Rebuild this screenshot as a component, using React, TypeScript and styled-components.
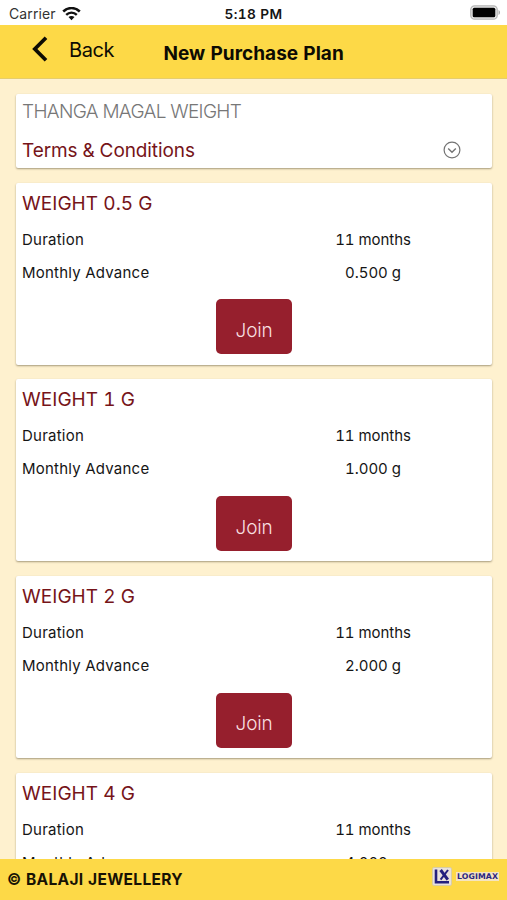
import React from 'react';
import styled, { createGlobalStyle } from 'styled-components';

const GlobalStyle = createGlobalStyle`
  * { box-sizing: border-box; }
  html, body { margin: 0; padding: 0; }
  body { background: #fef1cf; overflow: hidden; }
`;

const Screen = styled.div`
  width: 507px;
  height: 900px;
  display: flex;
  flex-direction: column;
  overflow: hidden;
  background: #fef1cf;
  color: #151515;
  font-family: Inter, "Liberation Sans", sans-serif;
  font-variant-numeric: tabular-nums;
`;

const StatusBar = styled.div`
  flex: none;
  height: 25px;
  display: grid;
  grid-template-columns: 1fr auto 1fr;
  align-items: center;
  padding: 3px 6px 0 9px;
  background: #fff;
  font-size: 14px;
  line-height: 20px;
`;

const Carrier = styled.div`
  display: flex;
  align-items: center;
  gap: 6px;
  color: #333;
  letter-spacing: 0.1px;

  svg { margin-top: -1px; }
`;

const Clock = styled.div`
  margin-right: 3px;
  font-weight: 600;
  font-size: 13.7px;
  letter-spacing: 0.4px;
`;

const BatterySlot = styled.div`
  display: flex;
  justify-content: flex-end;
  padding-bottom: 3px;
`;

const Header = styled.header`
  flex: none;
  height: 54px;
  display: grid;
  grid-template-columns: 163.5px 1fr;
  align-items: center;
  background: #fdd947;
  border-bottom: 1px solid #e6cd6c;
  color: #0d0b03;
`;

const BackButton = styled.button`
  display: flex;
  align-items: center;
  gap: 20px;
  padding: 0 0 6px 32px;
  border: 0;
  background: none;
  color: inherit;
  font: 400 20px/26px Inter, sans-serif;
  letter-spacing: -0.45px;

  span { padding-top: 2px; }
`;

const Title = styled.h1`
  margin: 0;
  padding-top: 4px;
  font-size: 19px;
  line-height: 26px;
  font-weight: 700;
  letter-spacing: 0.04px;
`;

const Content = styled.main`
  flex: 1;
  min-height: 0;
  overflow: hidden;
  display: flex;
  flex-direction: column;
  gap: 14.65px;
  padding: 15px 15px 0 16px;
`;

const Card = styled.section<{ $height: number }>`
  flex: none;
  height: ${(p) => p.$height}px;
  padding: 0 6px;
  background: #fff;
  border-radius: 2px;
  box-shadow: 0 1px 2px rgba(60, 50, 20, 0.45);
`;

const PlanName = styled.div`
  padding-top: 5px;
  font-size: 19px;
  line-height: 26px;
  font-weight: 300;
  letter-spacing: -0.65px;
  color: #777;
`;

const TermsRow = styled.div`
  display: flex;
  justify-content: space-between;
  align-items: center;
  padding: 13px 25px 0 0;
  font-size: 19px;
  line-height: 26px;
  letter-spacing: -0.1px;
  color: #761419;

  svg { margin-top: -3px; }
`;

const WeightTitle = styled.h2`
  margin: 0;
  padding-top: 8px;
  font-size: 19px;
  line-height: 26px;
  font-weight: 400;
  letter-spacing: 0.05px;
  color: #761419;
`;

const Details = styled.dl`
  margin: 0;
  padding-top: 6px;
  display: grid;
  grid-template-columns: 1fr 226px;
  grid-auto-rows: 33px;
  align-items: center;
  font-size: 15px;
  letter-spacing: 0.23px;
`;

const Label = styled.dt``;

const Value = styled.dd`
  margin: 0;
  text-align: center;
  letter-spacing: -0.05px;
`;

const JoinButton = styled.button`
  display: block;
  width: 76px;
  height: 55px;
  margin: 10.8px auto 0;
  padding: 8px 0 0;
  border: 0;
  border-radius: 5px;
  background: #961f2d;
  color: #f8dfe0;
  font: 300 19px/26px Inter, sans-serif;
  letter-spacing: -0.2px;
`;

const Footer = styled.footer`
  flex: none;
  height: 41.5px;
  display: flex;
  align-items: center;
  justify-content: space-between;
  padding: 0 8px 0 7px;
  background: #fdd947;
  color: #171204;
  font-size: 15.5px;
  font-weight: 700;
  letter-spacing: 0.33px;
`;

const Brand = styled.div`
  display: flex;
  align-items: center;
  gap: 4px;
  padding-bottom: 5px;
`;

const BrandName = styled.span`
  padding: 0 1px;
  background: #f5e4c0;
  color: #2a2580;
  font: 700 7.8px/9px "DejaVu Sans", sans-serif;
  letter-spacing: 0.1px;
`;

const WifiIcon = () => (
  <svg width="19" height="14" viewBox="0 0 19 14" fill="none" stroke="#111">
    <path d="M1.2 4.5C5.9-.1 13.1-.1 17.8 4.5" strokeWidth="2.5" />
    <path d="M4.2 7.8c3-2.9 7.6-2.9 10.6 0" strokeWidth="2.4" />
    <path d="M6.5 10.1c1.7-1.6 4.3-1.6 6 0l-3 3.1z" fill="#111" stroke="none" />
  </svg>
);

const BatteryIcon = () => (
  <svg width="31" height="15" viewBox="0 0 31 15">
    <rect x=".8" y=".8" width="26.4" height="13.4" rx="3.8" fill="#e8e8e8" stroke="#b5b5b5" strokeWidth="1.3" />
    <rect x="2.7" y="2.7" width="22.6" height="9.6" rx="1.6" fill="#000" />
    <path d="M28.5 5v5c2-.8 2-4.2 0-5z" fill="#aaa" />
  </svg>
);

const BackIcon = () => (
  <svg width="17" height="26" viewBox="0 0 17 26" fill="none" stroke="#0d0b03" strokeWidth="3.7">
    <path d="M14 1.7 2.8 13 14 24.3" />
  </svg>
);

const ExpandIcon = () => (
  <svg width="18" height="18" viewBox="0 0 18 18" fill="none" stroke="#737373" strokeWidth="1.2">
    <circle cx="9" cy="9" r="7.9" />
    <path d="m5.2 7.4 3.8 3.8 3.8-3.8" strokeWidth="1.4" />
  </svg>
);

const BrandIcon = () => (
  <svg width="20" height="19" viewBox="0 0 20 19" fill="none">
    <rect x=".5" y=".5" width="19" height="18" rx="1.5" fill="#e9e1dc" stroke="#d8cda5" />
    <path d="M4 2.5v12.7h13" stroke="#241f7d" strokeWidth="2.6" />
    <path d="m8.6 3 7.2 9.6" stroke="#241f7d" strokeWidth="3" />
    <path d="M16 3 8.6 12.6" stroke="#241f7d" strokeWidth="2" />
  </svg>
);

const plans = [
  { name: 'WEIGHT 0.5 G', advance: '0.500 g' },
  { name: 'WEIGHT 1 G', advance: '1.000 g' },
  { name: 'WEIGHT 2 G', advance: '2.000 g' },
  { name: 'WEIGHT 4 G', advance: '4.000 g' },
];

export default function App() {
  return (
    <Screen>
      <GlobalStyle />
      <StatusBar>
        <Carrier>Carrier <WifiIcon /></Carrier>
        <Clock>5:18 PM</Clock>
        <BatterySlot><BatteryIcon /></BatterySlot>
      </StatusBar>
      <Header>
        <BackButton><BackIcon /><span>Back</span></BackButton>
        <Title>New Purchase Plan</Title>
      </Header>
      <Content>
        <Card $height={74}>
          <PlanName>THANGA MAGAL WEIGHT</PlanName>
          <TermsRow>Terms &amp; Conditions <ExpandIcon /></TermsRow>
        </Card>
        {plans.map((plan) => (
          <Card key={plan.name} $height={182}>
            <WeightTitle>{plan.name}</WeightTitle>
            <Details>
              <Label>Duration</Label>
              <Value>11 months</Value>
              <Label>Monthly Advance</Label>
              <Value>{plan.advance}</Value>
            </Details>
            <JoinButton>Join</JoinButton>
          </Card>
        ))}
      </Content>
      <Footer>
        <span>© BALAJI JEWELLERY</span>
        <Brand><BrandIcon /><BrandName>LOGIMAX</BrandName></Brand>
      </Footer>
    </Screen>
  );
}
